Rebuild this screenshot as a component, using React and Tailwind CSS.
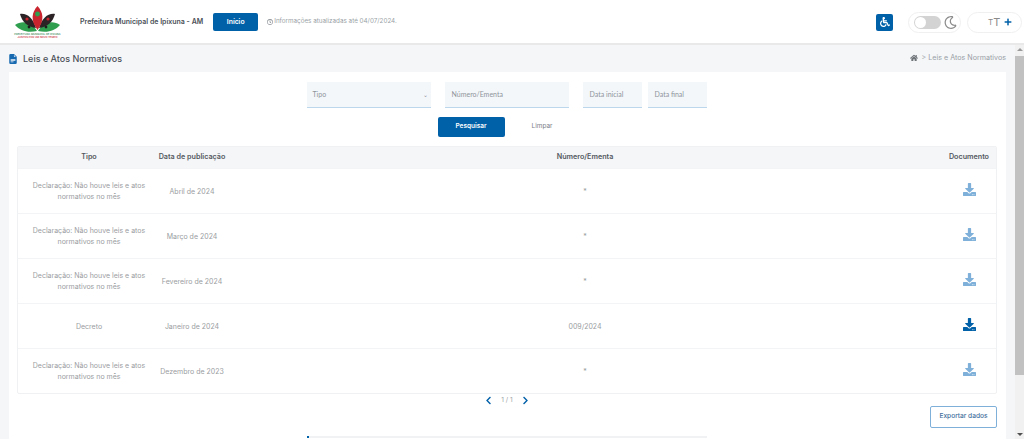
import React from "react"
import {
	FaChevronLeft,
	FaChevronRight,
	FaDownload,
	FaHome,
	FaPlus,
	FaRegClock,
	FaRegMoon,
	FaWheelchair,
} from "react-icons/fa"
import { BsFileEarmarkTextFill } from "react-icons/bs"

const rows = [
	{ tipo: "Declaração: Não houve leis e atos normativos no mês", data: "Abril de 2024", numero: "*" },
	{ tipo: "Declaração: Não houve leis e atos normativos no mês", data: "Março de 2024", numero: "*" },
	{ tipo: "Declaração: Não houve leis e atos normativos no mês", data: "Fevereiro de 2024", numero: "*" },
	{ tipo: "Decreto", data: "Janeiro de 2024", numero: "009/2024", active: true },
	{ tipo: "Declaração: Não houve leis e atos normativos no mês", data: "Dezembro de 2023", numero: "*" },
]

function Logo() {
	return (
		<div className="flex w-[47px] flex-col items-center">
			<svg width="47" height="27" viewBox="0 0 47 27">
				<path d="M1 19 C8 14 18 16 23 25 C14 27 6 25 1 19Z" fill="#2f9e4f" />
				<path d="M46 19 C39 14 29 16 24 25 C33 27 41 25 46 19Z" fill="#2f9e4f" />
				<path d="M6 8 C13 7 19 12 22 22 C14 21 8 16 6 8Z" fill="#2b2326" />
				<path d="M41 8 C34 7 28 12 25 22 C33 21 39 16 41 8Z" fill="#2b2326" />
				<path d="M23.5 0 C29 6 31 14 23.5 24 C16 14 18 6 23.5 0Z" fill="#c9252f" />
				<circle cx="23.5" cy="8" r="2.4" fill="#2f9e4f" />
				<circle cx="13" cy="13" r="1.6" fill="#c9252f" />
				<circle cx="34" cy="13" r="1.6" fill="#c9252f" />
				<circle cx="15" cy="21" r="1.4" fill="#1c1c1c" />
				<circle cx="32" cy="21" r="1.4" fill="#1c1c1c" />
			</svg>
			<span className="text-[2.6px] leading-[3px] font-medium whitespace-nowrap text-[#2f7d4a]">
				PREFEITURA MUNICIPAL DE IPIXUNA
			</span>
			<span className="text-[2.6px] leading-[3px] font-medium whitespace-nowrap text-[#c9252f]">
				JUNTOS POR UM NOVO TEMPO
			</span>
		</div>
	)
}

function Header() {
	return (
		<header className="flex h-[45px] items-center border-b-2 border-[#e9e9e9] bg-white pt-[1px] pr-[2px] pl-[14px]">
			<Logo />
			<span className="ml-[19px] text-[7px] font-semibold whitespace-nowrap text-[#4a4f57]">
				Prefeitura Municipal de Ipixuna - AM
			</span>
			<button className="ml-[10px] h-[18px] w-[45px] rounded-[2px] bg-[#0060a8] text-[6.8px] font-semibold text-white">
				Início
			</button>
			<span className="ml-[9px] flex items-center gap-[1px] text-[6.3px] whitespace-nowrap text-[#9a9fa6]">
				<FaRegClock className="text-[6px] text-[#7d8288]" />
				Informações atualizadas até 04/07/2024.
			</span>
			<div className="ml-auto flex items-center">
				<button className="flex h-[17px] w-[17px] items-center justify-center rounded-[2px] bg-[#0060a8] text-[10px] text-white">
					<FaWheelchair />
				</button>
				<div className="ml-[15px] flex h-[21px] w-[53px] items-center rounded-full border border-[#f0f0f0] pl-[5px]">
					<div className="flex h-[13px] w-[27px] items-center rounded-full bg-[#d3d3d3] pl-[1px]">
						<div className="h-[11px] w-[11px] rounded-full bg-white" />
					</div>
					<FaRegMoon className="ml-[3px] text-[13px] text-[#8b8b8b]" />
				</div>
				<div className="ml-[6px] flex h-[21px] w-[55px] items-center rounded-full border border-[#f0f0f0] pl-[20px] text-[#8b8b8b]">
					<span className="text-[8px] leading-none">T</span>
					<span className="text-[11px] leading-none">T</span>
					<FaPlus className="ml-[4px] text-[8px] text-[#0060a8]" />
				</div>
			</div>
		</header>
	)
}

function Filters() {
	return (
		<div className="flex justify-center pr-[1px] text-[7px] text-[#8e949b] font-[Lato,sans-serif]">
			<div className="flex h-[26px] w-[124px] items-center justify-between border-b border-[#bcd6ec] bg-[#f4f7fa] pr-[3px] pl-[6px]">
				<span>Tipo</span>
				<span className="text-[6px]">⌄</span>
			</div>
			<div className="ml-[14px] flex h-[26px] w-[124px] items-center border-b border-[#bcd6ec] bg-[#f4f7fa] pl-[7px]">
				Número/Ementa
			</div>
			<div className="ml-[14px] flex h-[26px] w-[59px] items-center border-b border-[#bcd6ec] bg-[#f4f7fa] pl-[7px]">
				Data inicial
			</div>
			<div className="ml-[6px] flex h-[26px] w-[59px] items-center border-b border-[#bcd6ec] bg-[#f4f7fa] pl-[7px]">
				Data final
			</div>
		</div>
	)
}

function Table() {
	return (
		<div className="mt-[9px] rounded-[2px] border border-[#f0f1f3]">
			<div className="grid h-[21px] grid-cols-[142px_64px_722px_1fr] items-center bg-[#f4f6f8] text-[7.2px] font-semibold text-[#55595f]">
				<span className="text-center">Tipo</span>
				<span className="justify-self-center whitespace-nowrap">Data de publicação</span>
				<span className="text-center">Número/Ementa</span>
				<span className="pr-[7px] text-right">Documento</span>
			</div>
			{rows.map((row) => (
				<div
					key={row.data}
					className="grid h-[45px] grid-cols-[142px_64px_722px_1fr] items-center border-t border-[#f3f4f5] text-center text-[7px] leading-[11px] text-[#9a9da1]"
				>
					<span className="px-[8px]">{row.tipo}</span>
					<span className="justify-self-center whitespace-nowrap">{row.data}</span>
					<span>{row.numero}</span>
					<span className="-mt-[3px] flex justify-center pr-[4px]">
						<FaDownload className={`text-[13px] ${row.active ? "text-[#0060a8]" : "text-[#7fb0da]"}`} />
					</span>
				</div>
			))}
		</div>
	)
}

export default function App() {
	return (
		<div className="flex h-[439px] w-[1024px] flex-col overflow-hidden bg-white font-[Inter,sans-serif]">
			<Header />
			<div className="flex min-h-0 flex-1">
				<main className="min-w-0 flex-1 overflow-hidden bg-[#f4f6f8]">
					<div className="flex h-[27px] items-center justify-between pr-[9px] pl-[8px]">
						<h1 className="flex items-center gap-[5px] text-[9px] font-medium text-[#4a4f57]">
							<BsFileEarmarkTextFill className="text-[10px] text-[#1769b0]" />
							Leis e Atos Normativos
						</h1>
						<span className="flex items-center gap-[4px] text-[7.15px] text-[#9a9fa6]">
							<FaHome className="text-[8px] text-[#6f7479]" />
							&gt; Leis e Atos Normativos
						</span>
					</div>
					<section className="mx-[9px] h-[400px] bg-white pt-[10px] pr-[9px] pl-[8px]">
						<Filters />
						<div className="mt-[9px] flex justify-center pr-[1px] text-[6.5px]">
							<button className="h-[20px] w-[67px] rounded-[2px] bg-[#0060a8] font-semibold text-white">
								Pesquisar
							</button>
							<button className="ml-[4px] h-[20px] w-[67px] text-[#7b8087]">Limpar</button>
						</div>
						<Table />
						<div className="mt-[2px] flex items-center justify-center text-[6.5px] text-[#9a9fa6]">
							<FaChevronLeft className="text-[9px] text-[#0060a8]" />
							<span className="mx-[8px]">1 / 1</span>
							<FaChevronRight className="text-[9px] text-[#0060a8]" />
						</div>
						<div className="flex justify-end">
							<button className="h-[22px] w-[67px] rounded-[2px] border border-[#7fb0da] text-[6.6px] font-medium text-[#3f6f9c]">
								Exportar dados
							</button>
						</div>
						<div className="mx-auto mt-[8px] flex h-[2px] w-[400px] bg-[#f1f2f4]">
							<div className="h-[2px] w-[2px] bg-[#0060a8]" />
						</div>
					</section>
				</main>
				<div className="flex w-[9px] flex-col items-center bg-[#f1f1f1]">
					<span className="mt-[3px] h-0 w-0 border-x-[3px] border-b-[3px] border-x-transparent border-b-[#9a9a9a]" />
					<div className="mt-[5px] h-[319px] w-full bg-[#c1c1c1]" />
					<span className="mt-auto mb-[3px] h-0 w-0 border-x-[3px] border-t-[3px] border-x-transparent border-t-[#505050]" />
				</div>
			</div>
		</div>
	)
}
